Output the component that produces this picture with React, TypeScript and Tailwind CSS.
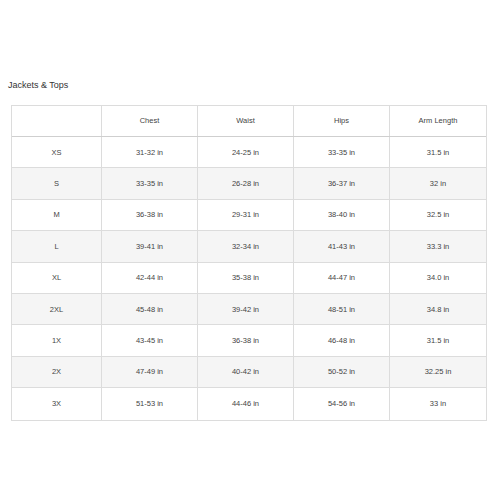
import React from "react";

const rows = [
  ["XS", "31-32 in", "24-25 in", "33-35 in", "31.5 in"],
  ["S", "33-35 in", "26-28 in", "36-37 in", "32 in"],
  ["M", "36-38 in", "29-31 in", "38-40 in", "32.5 in"],
  ["L", "39-41 in", "32-34 in", "41-43 in", "33.3 in"],
  ["XL", "42-44 in", "35-38 in", "44-47 in", "34.0 in"],
  ["2XL", "45-48 in", "39-42 in", "48-51 in", "34.8 in"],
  ["1X", "43-45 in", "36-38 in", "46-48 in", "31.5 in"],
  ["2X", "47-49 in", "40-42 in", "50-52 in", "32.25 in"],
  ["3X", "51-53 in", "44-46 in", "54-56 in", "33 in"],
];

const headers = ["", "Chest", "Waist", "Hips", "Arm Length"];

export default function App() {
  return (
    <div className="w-[500px] h-[500px] bg-white" style={{ fontFamily: '"Liberation Sans", Arial, sans-serif' }}>
      <div className="pt-[79px] pl-[8px] text-[9px] leading-[12px] text-[#333]">Jackets &amp; Tops</div>
      <div className="ml-[11px] mt-[14px] w-[476px] border border-[#dcdcdc]">
        <div className="grid grid-cols-[90px_96px_96px_96px_96px] h-[31px] border-b border-[#cfcfcf]">
          {headers.map((h, i) => (
            <div key={i} className={`flex items-center justify-center text-[7.5px] text-[#444] ${i < 4 ? "border-r border-[#dcdcdc]" : ""}`}>
              {h}
            </div>
          ))}
        </div>
        {rows.map((r, ri) => (
          <div
            key={ri}
            className={`grid grid-cols-[90px_96px_96px_96px_96px] h-[31.4px] ${ri < rows.length - 1 ? "border-b border-[#dcdcdc]" : ""} ${ri % 2 === 1 ? "bg-[#f5f5f5]" : "bg-white"}`}
          >
            {r.map((c, ci) => (
              <div key={ci} className={`flex items-center justify-center text-[7.5px] text-[#444] ${ci < 4 ? "border-r border-[#dcdcdc]" : ""}`}>
                {c}
              </div>
            ))}
          </div>
        ))}
      </div>
    </div>
  );
}
